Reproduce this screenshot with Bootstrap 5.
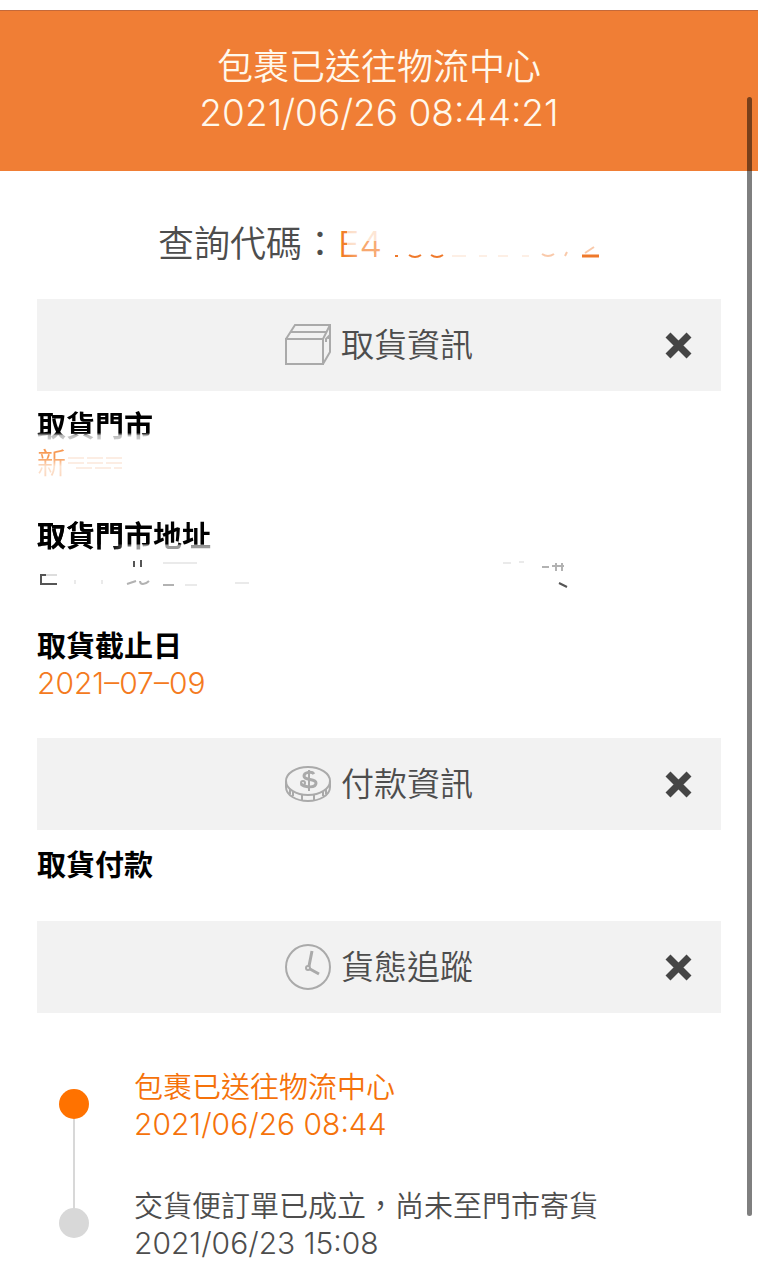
<!DOCTYPE html>
<html lang="zh-Hant">
<head>
<meta charset="utf-8">
<meta name="viewport" content="width=device-width, initial-scale=1">
<title>貨態查詢</title>
<link rel="stylesheet" href="https://cdn.jsdelivr.net/npm/bootstrap@5.3.0/dist/css/bootstrap.min.css">
<style>
  body { font-family: Inter, "Noto Sans CJK TC", sans-serif; font-weight: 350; color: #4d4d4d; background: #fff; font-size: 29px; line-height: 37px; }
  .status-banner { margin-top: 10px; padding: 34px 16px 36px; background: #f07e35; border-top: 1px solid #c4693a; color: #fff8ec; font-size: 36px; line-height: 45px; }
  .status-banner .stamp { font-size: 37px; }
  .page-body { padding: 0 37px; }
  .page-body .stamp { font-size: 30px; line-height: 36px; }
  .query-line { padding: 50px 0 32px; font-size: 36px; line-height: 46px; }
  .code-trace { width: 262px; height: 46px; }
  .code-lead { font-size: 36px; }
  .tone { color: #f47a20; }
  .section-bar { display: grid; grid-template-columns: 1fr auto 1fr; align-items: center; height: 92px; background: #f2f2f2; }
  .section-bar h2 { grid-column: 2; gap: 10px; font-size: 33px; line-height: 40px; font-weight: 350; }
  .section-bar h2 svg { width: 46px; height: 46px; fill: none; stroke: #aaa; stroke-width: 2; }
  .close-btn { justify-self: end; margin-right: 29px; line-height: 0; }
  .close-btn svg { width: 27px; height: 27px; stroke: #454545; stroke-width: 7; }
  .section-content { padding: 17px 0 37px; }
  .fields { gap: 37px; }
  .fields dt { font-weight: 700; color: #000; }
  .fields dd { height: 36px; }
  .faded { color: transparent; background-clip: text; -webkit-background-clip: text; }
  .fade-low { background-image: linear-gradient(#000 68%, #bbb 76%, #ddd); }
  .fade-side { background-image: linear-gradient(90deg, #000 42%, transparent 58%), linear-gradient(#000 70%, #999 76%); }
  .fade-name { background-image: linear-gradient(#f79a55 35%, #fce3d0 60%, #fbd3b8); }
  .tracking { padding: 56px 0 18px 22px; }
  .tracking li { gap: 45px; }
  .tracking li + li { margin-top: 46px; }
  .rail { width: 30px; padding-top: 20px; }
  .rail-dot { position: relative; width: 30px; height: 30px; border-radius: 50%; background: #d8d8d8; }
  .now .rail-dot { background: #ff7200; z-index: 1; }
  .now .rail-dot::after { content: ""; position: absolute; left: 14px; top: 30px; width: 2px; height: 90px; background: #d8d8d8; }
  .now { color: #f5720a; }
  .scroll-thumb { position: fixed; top: 97px; bottom: 64px; right: 6px; width: 5px; border-radius: 3px; background: rgba(0,0,0,.5); }
</style>
</head>
<body>
<header class="status-banner text-center">
  <div>包裹已送往物流中心</div>
  <div class="stamp">2021/06/26 08:44:21</div>
</header>
<main class="page-body">
  <div class="query-line d-flex justify-content-center">
    <span>查詢代碼：</span>
    <svg class="code-trace" viewBox="0 0 262 46" role="img" aria-label="E4">
      <defs>
        <linearGradient id="codeFade" x1="0" x2="1" y1="0" y2="0"><stop offset="0" stop-color="#f07012"/><stop offset=".45" stop-color="#f7a56a"/><stop offset="1" stop-color="#f8ad78"/></linearGradient>
      </defs>
      <text class="code-lead" x="0" y="36" fill="url(#codeFade)">E4</text>
      <path d="M9 8H20V29H9ZM22 8H46V20H22ZM23 32H36V37H23Z" fill="#fff" opacity=".7"/>
      <g fill="none" stroke="#ef792b" stroke-width="2">
        <path d="M57 35h3M71 34q6 4 12 0M93 34q6 4 12 0"/>
        <path d="M244 35h17" stroke-width="3"/>
        <g opacity=".4"><path d="M204 33q6 4 12 0M227 35l2-4M247 32l9-6"/></g>
        <g opacity=".12"><path d="M114 35h14M141 35h8M160 35h10M184 35h7"/></g>
      </g>
    </svg>
  </div>

  <section>
    <div class="section-bar">
      <h2 class="d-flex align-items-center mb-0">
        <svg viewBox="0 0 46 46" aria-hidden="true"><path d="M1 17H38V42H1ZM1 17 10 3H45L38 17M45 3V30L38 42M6 10H41M41 20V17L44 14V17"/></svg>
        取貨資訊
      </h2>
      <button type="button" class="close-btn btn p-0 border-0" aria-label="收合取貨資訊"><svg viewBox="0 0 27 27"><path d="M3 3 24 24M24 3 3 24"/></svg></button>
    </div>
    <dl class="section-content fields d-flex flex-column mb-0">
      <div>
        <dt><span class="faded fade-low">取貨門市</span></dt>
        <dd class="mb-0 d-flex">
          <span class="faded fade-name">新</span>
          <svg width="60" height="36" viewBox="0 0 60 36" aria-hidden="true"><path d="M2 13h56M2 18h56M10 23h46" stroke="#fbdcc8" stroke-width="2" stroke-dasharray="16 3" opacity=".5"/></svg>
        </dd>
      </div>
      <div>
        <dt><span class="faded fade-side">取貨門市地址</span></dt>
        <dd class="mb-0">
          <svg class="d-block" width="534" height="36" viewBox="0 0 534 36" fill="none" stroke="#555" stroke-width="2" aria-hidden="true">
            <path d="M20 20H4V29H20" opacity=".2"/>
            <path d="M9 20H4V29H20M97 6v6M104 5v7M522 28l8 4"/>
            <path d="M90 29l9-3M103 26q0 3 3 3t6-3M126 30h11M505 12h7M515 11h12M519 8v8M525 8v8" opacity=".45"/>
            <path d="M38 25v4M65 25v4M148 30h12M198 28h14M126 8h34M466 8h8M482 7h5" opacity=".12"/>
          </svg>
        </dd>
      </div>
      <div>
        <dt>取貨截止日</dt>
        <dd class="mb-0 tone stamp">2021–07–09</dd>
      </div>
    </dl>
  </section>

  <section>
    <div class="section-bar">
      <h2 class="d-flex align-items-center mb-0">
        <svg viewBox="0 0 46 46" aria-hidden="true"><ellipse cx="23" cy="20" rx="22" ry="14"/><path d="M1 20V26C1 34 11 40 23 40S45 34 45 26V20M5 28V33M8 31V35M17 34V39M29 34V39M38 31V35M41 28V33"/><path d="M29 13C27 10 19 11 19 15C19 20 31 17 31 22C31 27 20 27 16 23" stroke-width="3"/><path d="M24 9V30"/><circle cx="18" cy="22" r="2"/></svg>
        付款資訊
      </h2>
      <button type="button" class="close-btn btn p-0 border-0" aria-label="收合付款資訊"><svg viewBox="0 0 27 27"><path d="M3 3 24 24M24 3 3 24"/></svg></button>
    </div>
    <dl class="section-content fields mb-0"><dt>取貨付款</dt></dl>
  </section>

  <section>
    <div class="section-bar">
      <h2 class="d-flex align-items-center mb-0">
        <svg viewBox="0 0 46 46" aria-hidden="true"><circle cx="23" cy="23" r="22"/><path d="M27 7 24 22M25 25 34 30" stroke-width="3"/><circle cx="23" cy="24" r="2"/></svg>
        貨態追蹤
      </h2>
      <button type="button" class="close-btn btn p-0 border-0" aria-label="收合貨態追蹤"><svg viewBox="0 0 27 27"><path d="M3 3 24 24M24 3 3 24"/></svg></button>
    </div>
    <ol class="tracking list-unstyled mb-0">
      <li class="now d-flex">
        <div class="rail flex-shrink-0"><div class="rail-dot"></div></div>
        <div><div>包裹已送往物流中心</div><div class="stamp">2021/06/26 08:44</div></div>
      </li>
      <li class="d-flex">
        <div class="rail flex-shrink-0"><div class="rail-dot"></div></div>
        <div><div>交貨便訂單已成立，尚未至門市寄貨</div><div class="stamp">2021/06/23 15:08</div></div>
      </li>
    </ol>
  </section>
</main>
<div class="scroll-thumb" aria-hidden="true"></div>
<script src="https://cdn.jsdelivr.net/npm/bootstrap@5.3.0/dist/js/bootstrap.bundle.min.js"></script>
</body>
</html>
